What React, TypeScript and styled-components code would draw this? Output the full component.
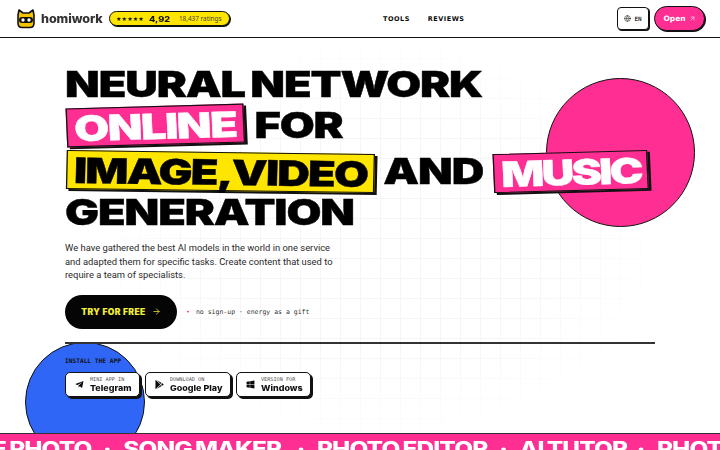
import React from "react";
import styled, { createGlobalStyle } from "styled-components";
import { FaTelegramPlane, FaWindows, FaGooglePlay } from "react-icons/fa";
import { Globe, ArrowUpRight, ArrowRight } from "lucide-react";

const Global = createGlobalStyle`
  html, body { margin: 0; padding: 0; background: #fff; }
  #root { width: 720px; height: 450px; overflow: hidden; }
  * { box-sizing: border-box; }
`;

const Page = styled.div`
  position: relative; width: 720px; height: 450px; overflow: hidden; background: #fff;
  font-family: "DejaVu Sans", sans-serif; color: #0a0a0a;
  display: flex; flex-direction: column;
`;
const Header = styled.header`
  height: 38px; flex: none; border-bottom: 1px solid #111; display: grid;
  grid-template-columns: 367px auto 1fr; align-items: center; padding: 0 15px 0 16px; background: #fff; position: relative; z-index: 2;
`;
const Brand = styled.div`display: flex; align-items: center; gap: 5px;`;
const Wordmark = styled.span`
  font: 800 12px Inter, sans-serif; color: #333; display: inline-block; transform: scaleX(1.05); transform-origin: left; width: 63px; letter-spacing: -.1px;
`;
const Rating = styled.div`
  height: 15px; width: 121px; border: 1px solid #111; border-radius: 8px; background: #ffe600; box-shadow: 1px 1px 0 #111;
  display: flex; align-items: center; padding-left: 6px; white-space: nowrap;
`;
const Stars = styled.span`font-size: 6px; letter-spacing: .2px; color: #111; margin-right: 5px;`;
const Score = styled.b`font: 800 8px Inter, sans-serif; display: inline-block; width: 17px; transform: scaleX(1.15); transform-origin: left; color: #111;`;
const Count = styled.span`font: 400 6.4px "Noto Sans", sans-serif; color: #444; margin-left: 13px;`;
const Nav = styled.nav`display: flex; gap: 18px; font-size: 6.5px; font-weight: 700; letter-spacing: .5px;`;
const Actions = styled.div`display: flex; justify-content: flex-end; gap: 5px; align-items: center;`;
const Lang = styled.div`
  width: 32px; height: 23px; border: 1px solid #111; border-radius: 4px; box-shadow: 1px 1px 0 #111; background: #fff;
  display: flex; align-items: center; justify-content: center; gap: 3px; font: 700 6px "DejaVu Sans Mono", monospace; color: #333;
`;
const Open = styled.div`
  width: 51px; height: 25px; border: 1px solid #111; border-radius: 13px; background: #ff2e93; box-shadow: 1px 1px 0 #111;
  color: #fff; display: flex; align-items: center; justify-content: center; gap: 3px; font-size: 7.5px; font-weight: 700;
`;
const Main = styled.main`
  position: relative; flex: 1; padding: 26px 65px 0;
  &::before {
    content: ""; position: absolute; inset: 0;
    background-image: linear-gradient(#f5f5f5 1px, transparent 1px), linear-gradient(90deg, #f5f5f5 1px, transparent 1px);
    background-size: 20px 20px;
    -webkit-mask-image: radial-gradient(ellipse 290px 210px at 380px 200px, #000 55%, transparent 100%);
    mask-image: radial-gradient(ellipse 290px 210px at 380px 200px, #000 55%, transparent 100%);
  }
`;
const Circle = styled.div<{ $c: string; $s: number; $l: number; $t: number }>`
  position: absolute; width: ${p => p.$s}px; height: ${p => p.$s}px; left: ${p => p.$l}px; top: ${p => p.$t}px;
  border-radius: 50%; border: 1px solid #111; background: ${p => p.$c};
`;
const Title = styled.h1`
  position: relative; margin: 0; font: 900 35px/41px Inter, sans-serif; letter-spacing: -.85px; word-spacing: -2px; width: 460px;
  transform: scaleX(1.29); transform-origin: left top; -webkit-text-stroke: .4px #000; color: #000;
`;
const Line = styled.div<{ $mt?: number; $gap?: number }>`
  display: flex; align-items: center; gap: ${p => p.$gap ?? 8}px; white-space: nowrap; height: 41px; margin-top: ${p => p.$mt ?? 0}px;
`;
const Tag = styled.span<{ $bg: string; $fg: string; $r: number; $ls: number }>`
  display: inline-block; margin-left: 1px; background: ${p => p.$bg}; color: ${p => p.$fg}; -webkit-text-stroke: .4px ${p => p.$fg};
  border: 1px solid #111; box-shadow: 2px 2px 0 #111; padding: 0 5px; line-height: 38px; height: 39px;
  letter-spacing: ${p => p.$ls}px; word-spacing: -3.5px;
  transform: rotate(${p => p.$r}deg);
`;
const Lead = styled.p`
  position: relative; margin: 8px 0 0; font: 400 9.4px/13.6px Roboto, sans-serif; color: #2a2a2a; white-space: nowrap;
`;
const CtaRow = styled.div`position: relative; display: flex; align-items: center; gap: 9px; margin-top: 13px;`;
const Cta = styled.div`
  width: 112px; height: 34px; border-radius: 17px; background: #050505; color: #f2ee3a;
  display: flex; align-items: center; justify-content: center; gap: 6px; font: 900 8.5px Inter, sans-serif; letter-spacing: .4px;
`;
const Note = styled.span`font: 400 6.5px "DejaVu Sans Mono", monospace; color: #333;`;
const Dot = styled.span`color: #ff2e93; margin-right: 6px;`;
const Rule = styled.div`position: relative; height: 2px; background: #333; margin-top: 13px; width: 590px;`;
const Install = styled.div`position: relative; font: 700 6.2px "DejaVu Sans Mono", monospace; margin-top: 13px; color: #111;`;
const Stores = styled.div`position: relative; display: flex; gap: 5px; margin-top: 8px;`;
const Store = styled.div<{ $w: number }>`
  width: ${p => p.$w}px; height: 25px; background: #fff; border: 1px solid #111; border-radius: 5px; box-shadow: 2px 2px 0 #111;
  display: flex; align-items: center; gap: 6px; padding-left: 9px;
`;
const StoreText = styled.div`display: flex; flex-direction: column; line-height: 1;`;
const StoreSmall = styled.span`font: 400 5.2px "DejaVu Sans Mono", monospace; color: #555; margin-bottom: 1px;`;
const StoreBig = styled.span`font: 800 8px Inter, sans-serif; color: #111; display: inline-block; transform: scaleX(1.12); transform-origin: left;`;
const Marquee = styled.div`
  position: absolute; left: 0; right: 0; top: 433px; height: 17px; background: #ff2e93; border-top: 1px solid #333; overflow: hidden;
  color: #fff; white-space: nowrap; z-index: 3;
`;
const MarqueeTrack = styled.div`
  display: flex; font: 800 19.5px/24px Inter, sans-serif; word-spacing: -1px; letter-spacing: -.7px; width: 800px;
  transform: scaleX(1.25); transform-origin: left top; margin-left: -8px; margin-top: 3px;
`;
const MarqueeItem = styled.div<{ $w: number }>`
  display: flex; flex: none; width: ${p => p.$w}px; white-space: pre;
  &::after { content: "·"; margin-left: auto; margin-right: 10px; }
`;

const Logo = () => (
  <svg width="20" height="21" viewBox="0 0 20 21">
    <path d="M2 7 L3 2 L7 5 H13 L17 2 L18 7 V15 Q18 19.5 14 19.5 H6 Q2 19.5 2 15 Z" fill="#f5c400" stroke="#111" strokeWidth="1.6" strokeLinejoin="round" />
    <rect x="3" y="9" width="14" height="6" rx="3" fill="#111" />
    <circle cx="7" cy="12" r="1.7" fill="#fff" />
    <circle cx="13" cy="12" r="1.7" fill="#fff" />
  </svg>
);

export default function App() {
  return (
    <Page>
      <Global />
      <Header>
        <Brand>
          <Logo />
          <Wordmark>homiwork</Wordmark>
          <Rating><Stars>★★★★★</Stars><Score>4,92</Score><Count>18,437 ratings</Count></Rating>
        </Brand>
        <Nav><span>TOOLS</span><span>REVIEWS</span></Nav>
        <Actions>
          <Lang><Globe size={7} strokeWidth={2} />EN</Lang>
          <Open>Open <ArrowUpRight size={7} strokeWidth={2} /></Open>
        </Actions>
      </Header>
      <Main>
        <Circle $c="#ff2e93" $s={149} $l={546} $t={40} />
        <Circle $c="#2f66f5" $s={120} $l={25} $t={304} />
        <Title>
          <Line>NEURAL NETWORK</Line>
          <Line><Tag $bg="#ff2e93" $fg="#fff" $r={-2} $ls={-1.1}>ONLINE</Tag>FOR</Line>
          <Line $mt={5} $gap={6.5}><Tag $bg="#ffe600" $fg="#000" $r={1} $ls={-1.4}>IMAGE, VIDEO</Tag>AND<Tag $bg="#ff2e93" $fg="#fff" $r={-2} $ls={-2}>MUSIC</Tag></Line>
          <Line>GENERATION</Line>
        </Title>
        <Lead>We have gathered the best AI models in the world in one service<br />and adapted them for specific tasks. Create content that used to<br />require a team of specialists.</Lead>
        <CtaRow>
          <Cta>TRY FOR FREE <ArrowRight size={9} /></Cta>
          <Note><Dot>•</Dot>no sign-up · energy as a gift</Note>
        </CtaRow>
        <Rule />
        <Install>INSTALL THE APP</Install>
        <Stores>
          <Store $w={75}><FaTelegramPlane size={9} /><StoreText><StoreSmall>MINI APP IN</StoreSmall><StoreBig>Telegram</StoreBig></StoreText></Store>
          <Store $w={86}><FaGooglePlay size={9} /><StoreText><StoreSmall>DOWNLOAD ON</StoreSmall><StoreBig>Google Play</StoreBig></StoreText></Store>
          <Store $w={75}><FaWindows size={9} /><StoreText><StoreSmall>VERSION FOR</StoreSmall><StoreBig>Windows</StoreBig></StoreText></Store>
        </Stores>
      </Main>
      <Marquee>
        <MarqueeTrack>
          <MarqueeItem $w={105}>E PHOTO</MarqueeItem>
          <MarqueeItem $w={155}>SONG MAKER</MarqueeItem>
          <MarqueeItem $w={162}>PHOTO EDITOR</MarqueeItem>
          <MarqueeItem $w={110}>AI TUTOR</MarqueeItem>
          <MarqueeItem $w={100}>PHOTO</MarqueeItem>
        </MarqueeTrack>
      </Marquee>
    </Page>
  );
}
